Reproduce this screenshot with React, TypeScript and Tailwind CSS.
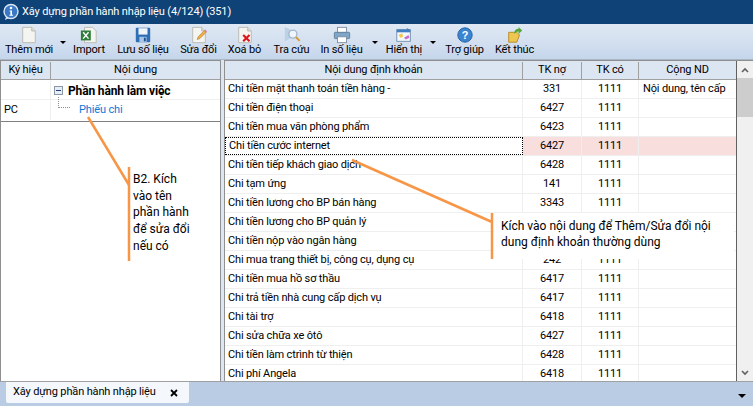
import { ReactNode } from "react";

const rows = [
	["Chi tiền mặt thanh toán tiền hàng -", "331", "1111", "Nội dung, tên cấp"],
	["Chi tiền điện thoại", "6427", "1111", ""],
	["Chi tiền mua văn phòng phẩm", "6423", "1111", ""],
	["Chi tiền cước internet", "6427", "1111", ""],
	["Chi tiền tiếp khách giao dịch", "6428", "1111", ""],
	["Chi tạm ứng", "141", "1111", ""],
	["Chi tiền lương cho BP bán hàng", "3343", "1111", ""],
	["Chi tiền lương cho BP quản lý", "", "", ""],
	["Chi tiền nộp vào ngân hàng", "", "", ""],
	["Chi mua trang thiết bị, công cụ, dụng cụ", "242", "1111", ""],
	["Chi tiền mua hồ sơ thầu", "6417", "1111", ""],
	["Chi trả tiền nhà cung cấp dịch vụ", "6417", "1111", ""],
	["Chi tài trợ", "6418", "1111", ""],
	["Chi sửa chữa xe ôtô", "6427", "1111", ""],
	["Chi tiền làm ctrình từ thiện", "6428", "1111", ""],
	["Chi phí Angela", "6418", "1111", ""],
];

function Page({ children }: { children?: ReactNode }) {
	return (
		<svg width="18" height="18" viewBox="0 0 20 20">
			<path d="M3 1.5h10l4 4v13H3z" fill="#f4f4f0" stroke="#b8b8b0" />
			<path d="M13 1.5v4h4" fill="#dcdcd6" stroke="#b8b8b0" />
			{children}
		</svg>
	);
}

function Tool({ label, icon, className }: { label: string; icon: ReactNode; className: string }) {
	return (
		<div className={`flex flex-col items-center shrink-0 ${className}`}>
			<div className="h-[18px] flex items-center justify-center">{icon}</div>
			<span className="leading-[12px] whitespace-nowrap">{label}</span>
		</div>
	);
}

function Caret({ className }: { className: string }) {
	return (
		<div
			className={`shrink-0 w-0 h-0 border-l-[3px] border-r-[3px] border-t-[3px] border-l-transparent border-r-transparent border-t-black ${className}`}
		/>
	);
}

function Callout() {
	return (
		<svg className="absolute left-0 top-0 pointer-events-none" width="753" height="406">
			<g stroke="#f79646" strokeWidth="2.5" fill="none">
				<path d="M88 117L129 185" />
				<path d="M129 167V261" />
				<path d="M352 160L492 222" />
				<path d="M492 213V259" />
			</g>
		</svg>
	);
}

export default function App() {
	return (
		<div className="relative w-[753px] h-[406px] overflow-hidden flex flex-col bg-[#dce6f3] text-[11px] tracking-[-0.15px] text-black font-['Roboto',sans-serif]">
			{/* title bar */}
			<div className="h-6 shrink-0 bg-[#0f4276] flex items-center pl-[2px] text-white">
				<svg width="18" height="18" viewBox="0 0 18 18">
					<circle cx="9" cy="8.5" r="7" fill="#3a78c4" stroke="#dbe7f5" strokeWidth="1.4" />
					<path d="M4 14l-1 3 4-2z" fill="#dbe7f5" />
					<circle cx="9" cy="5" r="1.3" fill="#fff" />
					<path d="M7.6 7.4h2.4v4.4h1v1H7.4v-1h1V8.4h-.8z" fill="#fff" />
				</svg>
				<span className="ml-[2px]">Xây dựng phần hành nhập liệu (4/124) (351)</span>
			</div>

			{/* toolbar */}
			<div className="h-[36px] shrink-0 bg-gradient-to-b from-[#dfe8f4] via-[#d4e0f0] to-[#c5d6eb] flex items-start pt-[2px] border-b border-[#a9b6c6]">
				<Tool label="Thêm mới" className="w-[46px] ml-[6px]" icon={<Page />} />
				<Caret className="ml-[8px] mt-[15px]" />
				<Tool
					label="Import"
					className="w-[30px] ml-[8px]"
					icon={
						<svg width="18" height="18" viewBox="0 0 20 20">
							<path d="M5 1.5h9l4 4v13H5z" fill="#f4f4f0" stroke="#b8b8b0" />
							<rect x="1" y="5" width="11" height="11" fill="#2f7d3a" />
							<path d="M3.5 7l6 7M9.5 7l-6 7" stroke="#fff" strokeWidth="1.6" />
						</svg>
					}
				/>
				<Tool
					label="Lưu số liệu"
					className="w-[52px] ml-[13px]"
					icon={
						<svg width="18" height="18" viewBox="0 0 20 20">
							<rect x="2" y="2" width="16" height="16" rx="1" fill="#2f6fb5" />
							<rect x="5" y="2.5" width="10" height="7" fill="#f2f6fb" />
							<rect x="6" y="12" width="8" height="6" fill="#a9c4e4" />
							<rect x="11" y="13" width="2" height="4" fill="#1c4f8c" />
						</svg>
					}
				/>
				<Tool
					label="Sửa đổi"
					className="w-[37px] ml-[11px]"
					icon={
						<Page>
							<path d="M8 15l1-3 7-7 2 2-7 7z" fill="#eeb045" stroke="#a8703a" strokeWidth=".6" />
							<path d="M16 5l2 2 1-1-2-2z" fill="#d77fb8" />
						</Page>
					}
				/>
				<Tool
					label="Xoá bỏ"
					className="w-[37px] ml-[9px]"
					icon={
						<Page>
							<path d="M8 10l7 7M15 10l-7 7" stroke="#e0141c" strokeWidth="2.4" />
						</Page>
					}
				/>
				<Tool
					label="Tra cứu"
					className="w-[37px] ml-[10px]"
					icon={
						<svg width="18" height="18" viewBox="0 0 20 20">
							<path d="M2 1l6 3v10l-6 3z" fill="#bcd0e6" />
							<circle cx="11" cy="9" r="4.5" fill="#eef5fb" stroke="#9fb4cc" strokeWidth="1.4" />
							<path d="M14.5 12.5l4 4" stroke="#d99a2b" strokeWidth="2.2" />
						</svg>
					}
				/>
				<Tool
					label="In số liệu"
					className="w-[43px] ml-[10px]"
					icon={
						<svg width="18" height="18" viewBox="0 0 20 20">
							<rect x="5" y="1.5" width="10" height="6" fill="#fff" stroke="#7d8ea3" />
							<rect x="1.5" y="7" width="17" height="7" rx="1" fill="#7fa6c8" stroke="#5f7a96" />
							<rect x="5" y="12" width="10" height="6.5" fill="#fff" stroke="#7d8ea3" />
						</svg>
					}
				/>
				<Caret className="ml-[9px] mt-[15px]" />
				<Tool
					label="Hiển thị"
					className="w-[38px] ml-[7px]"
					icon={
						<svg width="18" height="18" viewBox="0 0 20 20">
							<rect x="2" y="4" width="15" height="13" fill="#f4f7fb" stroke="#6f8cab" />
							<rect x="2" y="4" width="15" height="3" fill="#3f7fc4" />
							<path d="M4 10l4-2 1 4-3 1z" fill="#f2c84a" />
							<path d="M10 13l5-3 1 3-4 2z" fill="#c46fd0" />
							<path d="M13 2l4 3-3 2z" fill="#3f7fc4" />
						</svg>
					}
				/>
				<Caret className="ml-[7px] mt-[15px]" />
				<Tool
					label="Trợ giúp"
					className="w-[39px] ml-[9px]"
					icon={
						<svg width="18" height="18" viewBox="0 0 20 20">
							<circle cx="10" cy="10" r="8" fill="#3b84d0" stroke="#1f5c9e" />
							<text x="10" y="14.5" textAnchor="middle" fontSize="12" fontWeight="700" fill="#fff" fontFamily="Liberation Sans">?</text>
						</svg>
					}
				/>
				<Tool
					label="Kết thúc"
					className="w-[41px] ml-[10px]"
					icon={
						<svg width="18" height="18" viewBox="0 0 20 20">
							<path d="M3 7h9l3 3-3 8H3z" fill="#efc64f" stroke="#b58a24" />
							<path d="M9 9c0-4 2-6 5-6V1l4 4-4 4V6c-2 0-4 1-5 3z" fill="#57a83a" />
						</svg>
					}
				/>
			</div>

			{/* panels */}
			<div className="h-[321px] shrink-0 flex gap-[3px] bg-[#dce6f3]">
				<div className="w-[221px] shrink-0 bg-white border-x border-t border-[#8f8f8f] overflow-hidden">
					<div className="flex h-[19px] pt-px bg-[#dce6f3] border-b border-[#a0a0a0]">
						<div className="w-[50px] flex items-center justify-center border-r border-[#a0a0a0]">Ký hiệu</div>
						<div className="flex-1 flex items-center justify-center">Nội dung</div>
					</div>
					<div className="h-[42px] border-b border-[#808080]">
						<div className="flex h-[20px] border-b border-[#efefef]">
							<div className="w-[50px] border-r border-[#efefef]" />
							<div className="flex items-center pl-[3px] pt-[2px] font-bold text-[12px]">
								<span className="w-[9px] h-[9px] flex items-center justify-center border border-[#8c97a6] bg-[#e6edf6]">
									<span className="w-[5px] h-px bg-[#20407a]" />
								</span>
								<span className="ml-[5px]">Phần hành làm việc</span>
							</div>
						</div>
						<div className="flex h-[20px]">
							<div className="w-[50px] pl-[3px] pt-px flex items-center border-r border-[#efefef]">PC</div>
							<div className="relative flex items-center pl-[28px] pt-px text-[#0a78d8]">
								<span className="absolute left-[7px] top-[-3px] w-[12px] h-[11px] border-l border-b border-dotted border-[#909090]" />
								Phiếu chi
							</div>
						</div>
					</div>
				</div>

				<div className="flex-1 flex bg-white border-t border-[#8f8f8f] overflow-hidden">
					<div className="w-[512px] shrink-0 border-l border-[#8f8f8f]">
						<div className="flex h-[19px] pt-px bg-[#dce6f3] border-b border-[#a0a0a0]">
							<div className="w-[298px] flex items-center justify-center border-r border-[#a0a0a0]">Nội dung định khoản</div>
							<div className="w-[59px] flex items-center justify-center border-r border-[#a0a0a0]">TK nợ</div>
							<div className="w-[57px] flex items-center justify-center border-r border-[#a0a0a0]">TK có</div>
							<div className="flex-1 flex items-center justify-center">Cộng ND</div>
						</div>
						{rows.map((r, i) => (
							<div key={r[0]} className="flex h-[19px] border-b border-[#efefef]">
								<div
									className={`w-[298px] flex items-center pl-[3px] pt-px border-r ${
										i === 3 ? "border border-dotted border-black" : "border-[#efefef]"
									}`}
								>
									{r[0]}
								</div>
								<div className={`w-[59px] flex items-center justify-center pt-px border-r border-[#efefef] ${i === 3 ? "bg-[#f9dede]" : ""}`}>{r[1]}</div>
								<div className={`w-[57px] flex items-center justify-center pt-px border-r border-[#efefef] ${i === 3 ? "bg-[#f9dede]" : ""}`}>{r[2]}</div>
								<div className={`flex-1 flex items-center pl-[4px] pt-px whitespace-nowrap ${i === 3 ? "bg-[#f9dede]" : ""}`}>{r[3]}</div>
							</div>
						))}
					</div>
					{/* scrollbar */}
					<div className="flex-1 flex flex-col bg-[#f0f0f0] border-l border-[#606060]">
						<div className="h-[17px] flex items-center justify-center text-[#606060]">
							<svg width="8" height="6" viewBox="0 0 8 6"><path d="M1 5l3-3 3 3" stroke="#606060" strokeWidth="1.6" fill="none" /></svg>
						</div>
						<div className="h-[39px] bg-[#cdcdcd]" />
						<div className="flex-1" />
						<div className="h-[17px] flex items-center justify-center">
							<svg width="8" height="6" viewBox="0 0 8 6"><path d="M1 1l3 3 3-3" stroke="#606060" strokeWidth="1.6" fill="none" /></svg>
						</div>
					</div>
				</div>
			</div>

			{/* bottom tabs */}
			<div className="flex-1 bg-[#b9cce4] border-t border-[#a0a0a0] flex justify-between items-start">
				<div className="ml-[6px] w-[183px] h-[21px] bg-[#f4f8fd] rounded-b-[2px] flex items-center pl-[7px] whitespace-nowrap">
					Xây dựng phần hành nhập liệu
					<svg className="ml-[14px]" width="8" height="8" viewBox="0 0 8 8"><path d="M1 1l6 6M7 1l-6 6" stroke="#000" strokeWidth="1.8" /></svg>
				</div>
				<Caret className="mt-[12px] mr-[7px] border-l-[4px] border-r-[4px] border-t-[4px]" />
			</div>

			{/* annotations */}
			<Callout />
			<div className="absolute left-[133px] top-[171px] w-[62px] bg-white text-[12px] tracking-normal leading-[16.7px] whitespace-nowrap">
				B2. Kích<br />vào tên<br />phần hành<br />để sửa đổi<br />nếu có
			</div>
			<div className="absolute left-[494px] top-[213px] w-[240px] h-[46px] bg-white pl-[7px] pt-[5px] text-[12px] tracking-normal leading-[16px] whitespace-nowrap">
				Kích vào nội dung để Thêm/Sửa đổi nội<br />dung định khoản thường dùng
			</div>
		</div>
	);
}
